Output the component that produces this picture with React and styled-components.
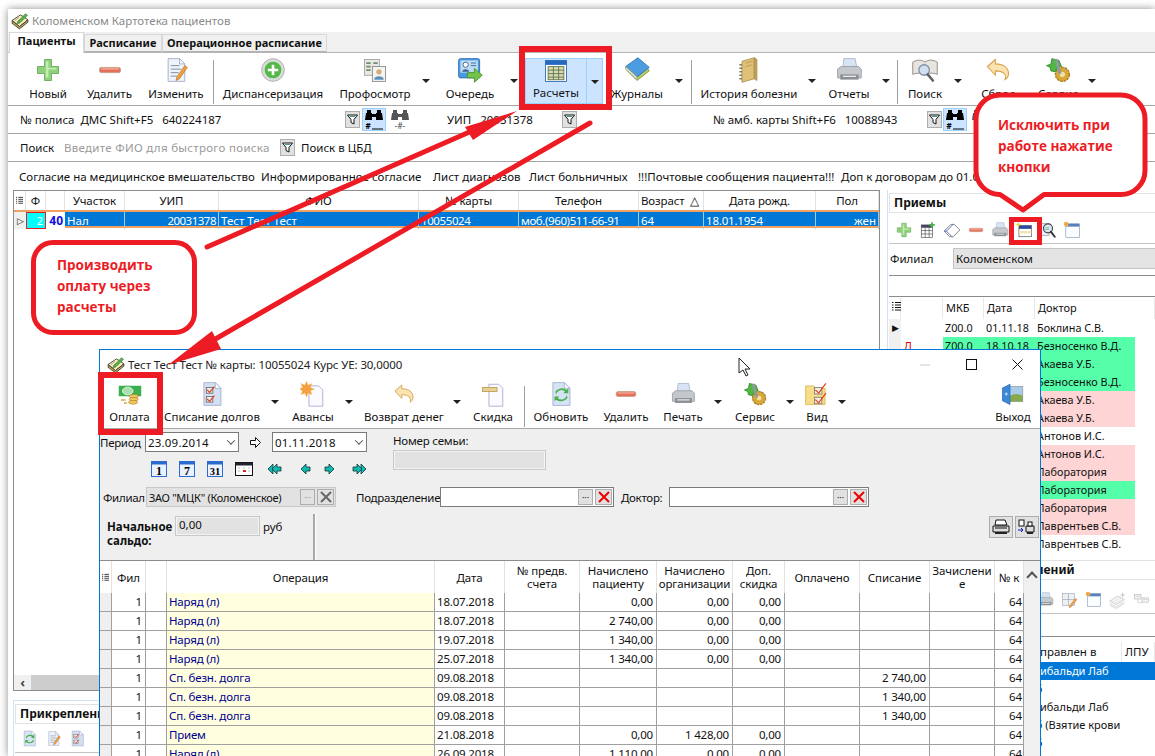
import React from "react";
import styled, { createGlobalStyle } from "styled-components";

const GlobalStyle = createGlobalStyle`
  html, body { margin: 0; padding: 0; background: #fff; overflow: hidden; }
  body { font-family: "Noto Sans", "Open Sans", sans-serif; font-size: 11.5px; color: #111; }
  #root { width: 1155px; height: 756px; position: relative; overflow: hidden; }
`;

/* ---------- icons ---------- */
const Svg = ({ s = 28, children }) => (
  <svg width={s} height={s} viewBox="0 0 32 32">{children}</svg>
);

const AppIcon = ({ s }) => (
  <Svg s={s}>
    <path d="M2 15L17 5l13 9-15 12z" fill="#f6eeb8" stroke="#333" strokeWidth="1.500" />
    <path d="M2 15v5l13 10 15-12v-4L15 26z" fill="#c8a850" stroke="#333" strokeWidth="1.500" />
    <path d="M13 16L26 3l3 3-13 13-5 2z" fill="#58b848" stroke="#2c6c24" strokeWidth="1.200" />
    <path d="M7 15l7-5M10 18l7-5" stroke="#777" />
  </Svg>
);
const PlusIcon = ({ s }) => (
  <Svg s={s}>
    <path d="M12 4h8v8h8v8h-8v8h-8v-8H4v-8h8z" fill="#8fd07a" stroke="#6aa85c" strokeLinejoin="round" />
    <path d="M13.500 6h3v7.500h9v2h-9v9h-3z" fill="#c3ecb2" />
  </Svg>
);
const MinusIcon = ({ s }) => (
  <Svg s={s}>
    <rect x="4" y="13" width="24" height="6" rx="2" fill="#e4705a" stroke="#c9a08a" />
    <rect x="6" y="14" width="20" height="1.500" fill="#f4b09c" />
  </Svg>
);
const DocBase = ({ fold = "#fff" }) => (
  <>
    <path d="M7 3h13l6 6v20H7z" fill="#eef4fb" stroke="#9fa8cc" />
    <path d="M20 3v6h6z" fill={fold} stroke="#9fa8cc" />
  </>
);
const NoteIcon = ({ s }) => (
  <Svg s={s}>
    <DocBase />
    <path d="M10 11h10M10 15h12M10 19h9M10 23h7" stroke="#7a8296" />
    <path d="M17 24l9-13 3 2-9 13-4 2z" fill="#f0a040" stroke="#a86a20" strokeWidth=".7" />
  </Svg>
);
const CirclePlusIcon = ({ s }) => (
  <Svg s={s}>
    <circle cx="16" cy="16" r="13" fill="#d8dcd8" stroke="#aaa" />
    <circle cx="16" cy="16" r="9.500" fill="#52b848" />
    <path d="M14.500 10h3v4.500H22v3h-4.500V22h-3v-4.500H10v-3h4.500z" fill="#fff" />
  </Svg>
);
const ProfileIcon = ({ s }) => (
  <Svg s={s}>
    <rect x="4" y="4" width="17" height="18" fill="#e8e8e4" stroke="#a0a0a0" />
    <path d="M6 8h5M6 12h5M6 16h5M14 8h5" stroke="#6f8f6f" strokeWidth="2" />
    <rect x="13" y="12" width="15" height="17" fill="#f4f4f0" stroke="#8a8a8a" />
    <circle cx="20.500" cy="18" r="3" fill="#d8a880" />
    <path d="M15 27c0-5 11-5 11 0z" fill="#5f8fb8" />
  </Svg>
);
const QueueIcon = ({ s }) => (
  <Svg s={s}>
    <rect x="3" y="3" width="24" height="22" rx="2" fill="#4a9ae0" stroke="#2c6cb0" />
    <rect x="5" y="5" width="20" height="14" fill="#bcdcf4" />
    <circle cx="11" cy="10" r="3" fill="#fff" stroke="#3a5a80" />
    <path d="M7 18c0-4 8-4 8 0z" fill="#3a6090" />
    <path d="M17 8h6M17 11h6" stroke="#3a6090" />
    <path d="M13 19h8v-5l9 8-9 8v-5h-8z" fill="#74c44a" stroke="#4a9030" />
  </Svg>
);
const CalcIcon = ({ s }) => (
  <Svg s={s}>
    <rect x="4" y="4" width="24" height="24" fill="#fff" stroke="#2c68b0" />
    <rect x="4" y="4" width="24" height="5" fill="#2468c0" />
    <rect x="7" y="11" width="18" height="15" fill="#d6dcb0" stroke="#5c7050" />
    <path d="M7 15h18M7 19h18M7 23h18M13 11v15M19 11v15" stroke="#5c7050" />
  </Svg>
);
const BookIcon = ({ s }) => (
  <Svg s={s}>
    <path d="M4 16l12 12 14-11-2-3-12 10L6 14z" fill="#b8cc60" stroke="#8a9a40" />
    <path d="M3 12L17 2l13 11-14 11z" fill="#4c9ce0" stroke="#2c74b8" />
    <path d="M3 12l13 12v3L3 15z" fill="#e8ecd8" stroke="#9aa080" />
  </Svg>
);
const NotebookIcon = ({ s }) => (
  <Svg s={s}>
    <path d="M8 6l14-4v24l-14 4z" fill="#e0c078" stroke="#a89050" />
    <path d="M22 2l3 2v24l-3-2z" fill="#c4a050" stroke="#a89050" />
    <path d="M8 10h-3M8 14h-3M8 18h-3M8 22h-3M8 26h-3" stroke="#807860" strokeWidth="1.500" />
    <path d="M12 8l8-2M12 12l8-2" stroke="#b89850" />
  </Svg>
);
const PrinterIcon = ({ s }) => (
  <Svg s={s}>
    <path d="M10 3h13l2 11H9z" fill="#d8e4f4" stroke="#a8b4c4" />
    <path d="M3 15l4-3h20l3 3v10H3z" fill="#c4c8cc" stroke="#989ca0" />
    <rect x="6" y="21" width="21" height="6" fill="#8c9094" />
    <rect x="9" y="22.500" width="15" height="1.500" fill="#e8e8e8" />
  </Svg>
);
const BookSearchIcon = ({ s }) => (
  <Svg s={s}>
    <path d="M2 7c5-3 10-3 14 0 4-3 9-3 14 0v14c-5-2-10-2-14 1-4-3-9-3-14-1z" fill="#e8e4e0" stroke="#8a8480" />
    <circle cx="15" cy="16" r="6" fill="#cfe0f0" stroke="#8090a0" strokeWidth="1.500" />
    <path d="M19 21l6 7" stroke="#606468" strokeWidth="3" strokeLinecap="round" />
  </Svg>
);
const UndoIcon = ({ s }) => (
  <Svg s={s}>
    <path d="M4 12l9-8v5c9 0 15 4 15 11 0 3-2 6-4 7 1-2 1-5-1-7s-5-3-10-3v5z" fill="#fae3b0" stroke="#d8a050" strokeWidth="1.200" />
  </Svg>
);
const ServiceIcon = ({ s }) => (
  <Svg s={s}>
    <circle cx="21" cy="21" r="8" fill="#d8a838" stroke="#a87c20" strokeWidth="1.500" strokeDasharray="3 1" />
    <circle cx="21" cy="21" r="3" fill="#f4e0a0" />
    <path d="M3 11l5-2 1-6 8 2 3 7-5 1-2 5-5-1-1-4z" fill="#50b840" stroke="#308a28" />
    <path d="M14 5l4 14" stroke="#9098a0" strokeWidth="3.500" strokeLinecap="round" />
  </Svg>
);
const MoneyIcon = ({ s }) => (
  <Svg s={s}>
    <rect x="1" y="5" width="30" height="14" fill="#3cb050" />
    <ellipse cx="13" cy="12" rx="7" ry="5" fill="#a8e0b0" stroke="#fff" />
    <path d="M4 24h6M8 28h4" stroke="#d8a840" strokeWidth="2" />
    <ellipse cx="21" cy="19" rx="6" ry="2.500" fill="#f0c860" stroke="#b88a30" />
    <ellipse cx="21" cy="23" rx="6" ry="2.500" fill="#f0c860" stroke="#b88a30" />
    <ellipse cx="20" cy="27" rx="6" ry="2.500" fill="#f0c860" stroke="#b88a30" />
  </Svg>
);
const CheckDocIcon = ({ s }) => (
  <Svg s={s}>
    <path d="M6 2h14l7 7v21H6z" fill="#d4e0f2" stroke="#9fa8cc" />
    <path d="M20 2v7h7z" fill="#fff" stroke="#9fa8cc" />
    <rect x="9" y="8" width="8" height="7" fill="#eee" stroke="#666" />
    <rect x="9" y="19" width="8" height="7" fill="#eee" stroke="#666" />
    <path d="M10 11l3 3 6-7M10 22l3 3 6-7" stroke="#e04020" strokeWidth="1.500" fill="none" />
  </Svg>
);
const StarDocIcon = ({ s }) => (
  <Svg s={s}>
    <path d="M11 6h12l5 5v20H11z" fill="#fafaff" stroke="#a8a0d0" />
    <path d="M8 0l2 5 5-2-2 5 5 2-5 2 2 5-5-2-2 5-2-5-5 2 2-5-5-2 5-2-2-5 5 2z" fill="#f4a040" stroke="#f8d080" strokeWidth=".5" />
  </Svg>
);
const TagDocIcon = ({ s }) => (
  <Svg s={s}>
    <path d="M11 4h12l5 5v22H11z" fill="#fafaff" stroke="#a8a0d0" />
    <rect x="3" y="8" width="18" height="5" fill="#e8d090" stroke="#b89a50" />
  </Svg>
);
const RefreshDocIcon = ({ s }) => (
  <Svg s={s}>
    <path d="M6 2h14l7 7v21H6z" fill="#d4e4f4" stroke="#9fa8cc" />
    <path d="M20 2v7h7z" fill="#fff" stroke="#9fa8cc" />
    <path d="M10 17a6.500 6.500 0 0 1 11-4l-2 2h6v-6l-2 2a10 10 0 0 0-14 2z" fill="#48b048" />
    <path d="M23 17a6.500 6.500 0 0 1-11 4l2-2H8v6l2-2a10 10 0 0 0 14-2z" fill="#48b048" />
  </Svg>
);
const FolderCheckIcon = ({ s }) => (
  <Svg s={s}>
    <path d="M2 6h10l2 3h12v20H2z" fill="#f8dc88" stroke="#d8b858" />
    <rect x="13" y="8" width="9" height="8" fill="#f4f0e0" stroke="#777" />
    <rect x="13" y="20" width="9" height="8" fill="#f4f0e0" stroke="#777" />
    <path d="M14 11l4 4 9-12M14 23l4 4 9-12" stroke="#e04020" strokeWidth="1.500" fill="none" />
  </Svg>
);
const ExitIcon = ({ s }) => (
  <Svg s={s}>
    <rect x="10" y="6" width="19" height="20" fill="#a8cce8" stroke="#8a9ab0" />
    <path d="M10 20c6-5 12-5 19-2v8H10z" fill="#88a850" />
    <path d="M2 8l10-5v27L2 25z" fill="#3c88d8" stroke="#2c68b0" />
    <path d="M5 16h4M7 14v4" stroke="#fff" />
  </Svg>
);
const TableAddIcon = ({ s }) => (
  <Svg s={s}>
    <rect x="4" y="7" width="20" height="22" fill="#fff" stroke="#333" />
    <rect x="4" y="7" width="20" height="5" fill="#446" />
    <path d="M4 17h20M4 23h20M11 12v17M18 12v17" stroke="#333" />
    <path d="M23 2v10M18 7h10" stroke="#48b048" strokeWidth="3" />
  </Svg>
);
const EraserIcon = ({ s }) => (
  <Svg s={s}>
    <path d="M2 18L14 6h6l10 10-12 12h-6z" fill="#fff" stroke="#333" />
    <path d="M2 18l4 0 12-12M6 18l10 10" fill="none" stroke="#3858c0" strokeWidth="1.500" />
  </Svg>
);
const WizardIcon = ({ s }) => (
  <Svg s={s}>
    <rect x="7" y="8" width="22" height="20" fill="#fff" stroke="#333" />
    <rect x="7" y="8" width="22" height="6" fill="#2c4ca0" />
    <rect x="7" y="18" width="22" height="4" fill="#f0e4b0" />
    <path d="M6 1l1.500 4 4 1.500-4 1.500L6 12 4.500 8l-4-1.500 4-1.500z" fill="#e8e040" />
  </Svg>
);
const FindDocIcon = ({ s }) => (
  <Svg s={s}>
    <rect x="4" y="4" width="14" height="22" fill="#eef" stroke="#888" />
    <circle cx="16" cy="13" r="8" fill="#dfeaf0" stroke="#444" strokeWidth="2" />
    <path d="M11 12h7M11 15h7" stroke="#2a9a90" />
    <path d="M21 19l7 9" stroke="#333" strokeWidth="3.500" strokeLinecap="round" />
  </Svg>
);
const WindowStarIcon = ({ s }) => (
  <Svg s={s}>
    <rect x="5" y="5" width="24" height="24" fill="#fbfcff" stroke="#7088b0" />
    <rect x="5" y="5" width="24" height="5" fill="#5880b8" />
    <rect x="2" y="2" width="7" height="7" fill="#f4a040" stroke="#f8e080" strokeDasharray="2 1" />
  </Svg>
);
const PencilGridIcon = ({ s }) => (
  <Svg s={s}>
    <rect x="3" y="5" width="22" height="22" fill="#f0f0f0" stroke="#8898b0" />
    <path d="M3 16h22M14 5v22" stroke="#8898b0" />
    <path d="M16 28l11-14 3 2-11 14-4 1z" fill="#f0a040" stroke="#a86a20" strokeWidth=".7" />
  </Svg>
);
const FadedPileIcon = ({ s }) => (
  <Svg s={s}>
    <path d="M3 18L17 9l12 6-14 9z" fill="#f0f0f0" stroke="#b8b8b8" />
    <path d="M3 22l12 6 14-9M3 25l12 6 14-9" fill="none" stroke="#b8b8b8" />
    <path d="M26 3v8M22 7h8" stroke="#c8c8c8" strokeWidth="2" />
  </Svg>
);
const FadedTreeIcon = ({ s }) => (
  <Svg s={s}>
    <rect x="3" y="7" width="12" height="8" fill="#f4f4f4" stroke="#aaa" />
    <rect x="17" y="13" width="12" height="8" fill="#f4f4f4" stroke="#aaa" />
    <path d="M9 15v7h8M5 10h8M19 16h8" stroke="#bbb" fill="none" />
  </Svg>
);
const FadedHelpIcon = ({ s }) => (
  <Svg s={s}>
    <path d="M5 3h22v24h-8l-3 3v-3H5z" fill="#fafafa" stroke="#b0b0b0" strokeWidth="1.500" strokeLinejoin="round" />
    <path d="M12 11c0-5 9-5 9 0 0 3-4 3-4 7M17 21v2" stroke="#aaa" strokeWidth="2" fill="none" />
  </Svg>
);
const FunnelIcon = () => (
  <svg width="11" height="11" viewBox="0 0 11 11">
    <path d="M.5 1h10L7 5.500V10L4 8.500v-3z" fill="#fff" stroke="#111" />
    <path d="M3 2.500h5" stroke="#3aa088" />
  </svg>
);
const BinocularIcon = ({ dim }) => (
  <svg width="20" height="22" viewBox="0 0 20 22">
    <g fill={dim ? "#555" : "#000"}>
      <rect x="3" y="1" width="4" height="3" />
      <rect x="13" y="1" width="4" height="3" />
      <path d="M2 4h6v7H1zM12 4h6l1 7h-7z" />
      <rect x="8" y="5" width="4" height="3" />
    </g>
    {dim ? (
      <text x="10" y="20" fontSize="8" textAnchor="middle" fontFamily="Noto Sans" fill="#444">-#-</text>
    ) : (
      <>
        <text x="4" y="20" fontSize="8" textAnchor="middle" fontFamily="Noto Sans" fontWeight="700">#</text>
        <path d="M8 20h11" stroke="#000" />
      </>
    )}
  </svg>
);
const ListGlyph = () => (
  <svg width="9" height="11" viewBox="0 0 9 11">
    <path d="M0 1.500h1.500M3 1.500h6M0 4h1.500M3 4h6M0 6.500h1.500M3 6.500h6M0 9h1.500M3 9h6" stroke="#111" />
  </svg>
);
const CalNum = ({ n }) => (
  <svg width="16" height="16" viewBox="0 0 16 16">
    <rect x=".5" y=".5" width="15" height="15" fill="#eaf2ff" stroke="#2c6cd0" />
    <rect x=".5" y=".5" width="15" height="3" fill="#2c6cd0" />
    <text x="8" y="14" fontSize={n.length > 1 ? 10.500 : 12} textAnchor="middle" fontFamily="Liberation Serif" fontWeight="700">{n}</text>
  </svg>
);
const CalGrid = () => (
  <svg width="18" height="14" viewBox="0 0 18 14">
    <rect x=".5" y=".5" width="17" height="13" fill="#fff" stroke="#111" />
    <rect x=".5" y=".5" width="17" height="3" fill="#223" />
    <path d="M3 6h2M8 6h2M13 6h2M3 9h2M13 9h2" stroke="#bbb" />
    <path d="M8 9h3" stroke="#d22" strokeWidth="2" />
  </svg>
);
const NavArrow = ({ flip, dbl }) => (
  <svg width="15" height="12" viewBox="0 0 15 12" style={{ transform: flip ? "scaleX(-1)" : "none" }}>
    {dbl && <path d="M1 6l5-5v10z" fill="#10b8b0" stroke="#133" strokeWidth=".8" />}
    <path d="M5 6l5-5v3h4v4h-4v3z" fill="#10b8b0" stroke="#133" strokeWidth=".8" />
  </svg>
);
const HollowArrow = () => (
  <svg width="11" height="11" viewBox="0 0 11 11">
    <path d="M.5 3.500h5V.5l5 5-5 5v-3h-5z" fill="#fff" stroke="#111" />
  </svg>
);
const XMark = ({ color }) => (
  <svg width="12" height="12" viewBox="0 0 12 12">
    <path d="M1 1l10 10M11 1L1 11" stroke={color} strokeWidth="2" />
  </svg>
);
const SmallPrinter = () => (
  <svg width="18" height="16" viewBox="0 0 18 16">
    <path d="M4 1h9l2 5H3z" fill="#fff" stroke="#111" />
    <path d="M1 7h16v6H1z" fill="#ddd" stroke="#111" />
    <path d="M3 13h12v2H3z" fill="#222" />
    <path d="M3 9h12" stroke="#111" />
  </svg>
);
const PrintSendIcon = () => (
  <svg width="18" height="16" viewBox="0 0 18 16">
    <rect x="1" y="1" width="5" height="6" fill="#fff" stroke="#111" />
    <path d="M0 11h5M3 9l2 2-2 2" stroke="#1018c0" fill="none" />
    <path d="M8 7h8v6H8z" fill="#ddd" stroke="#111" />
    <path d="M9 13h6v2H9z" fill="#222" />
    <rect x="10" y="3" width="4" height="4" fill="#fff" stroke="#111" />
  </svg>
);

/* ---------- windows ---------- */
const MainWindow = styled.div`
  position: absolute;
  left: 8px;
  top: 9px;
  width: 1147px;
  height: 747px;
  background: #fff;
  box-shadow: 0 0 8px rgba(0, 0, 0, 0.45);
  overflow: hidden;
  display: flex;
  flex-direction: column;
`;
const TitleBar = styled.div`
  height: 23px;
  display: flex;
  align-items: center;
  gap: 3px;
  padding-left: 3px;
  color: ${(p) => p.$color || "#8a8a8a"};
  flex: none;
`;
const TitleText = styled.span`
  font-size: 11.500px;
  white-space: nowrap;
  letter-spacing: ${(p) => p.$ls || 0}px;
`;
const TabStrip = styled.div`
  height: 21px;
  flex: none;
  background: #f0f0f0;
  border-bottom: 1px solid #b4b4b4;
  display: flex;
  align-items: flex-end;
  padding-left: 1px;
  box-sizing: border-box;
`;
const Tab = styled.div`
  width: ${(p) => p.$w}px;
  height: ${(p) => (p.$active ? 21 : 18)}px;
  margin-bottom: ${(p) => (p.$active ? -1 : 0)}px;
  background: ${(p) => (p.$active ? "#fff" : "#f0f0f0")};
  border: 1px solid #d8d8d8;
  border-bottom: ${(p) => (p.$active ? "none" : "1px solid #b4b4b4")};
  box-sizing: border-box;
  font-weight: 700;
  font-size: 11px;
  text-align: center;
  line-height: 16px;
  white-space: nowrap;
`;

const Toolbar = styled.div`
  height: ${(p) => p.$h}px;
  flex: none;
  display: flex;
  align-items: stretch;
  padding-left: ${(p) => p.$pl}px;
  border-bottom: 1px solid #a8a8a8;
  box-sizing: border-box;
  background: #fff;
`;
const ToolButton = styled.div`
  width: ${(p) => p.$w}px;
  flex: none;
  display: flex;
  flex-direction: column;
  align-items: center;
  justify-content: flex-end;
  padding-bottom: ${(p) => p.$pb}px;
  box-sizing: border-box;
  white-space: nowrap;
`;
const ToolIcon = styled.div`
  height: 32px;
  display: flex;
  align-items: center;
  justify-content: center;
`;
const Caret = styled.div`
  width: ${(p) => p.$w || 14}px;
  flex: none;
  display: flex;
  justify-content: center;
  padding-top: ${(p) => p.$top}px;
  &::after {
    content: "";
    border-left: 4px solid transparent;
    border-right: 4px solid transparent;
    border-top: 4px solid #222;
    height: 0;
  }
`;
const ToolSep = styled.div`
  width: 1px;
  flex: none;
  background: #a0a0a0;
  margin: 7px 1px 1px ${(p) => p.$ml ?? 1}px;
`;
const SplitHighlight = styled.div`
  display: flex;
  flex: none;
  margin-left: 4px;
  background: #cce4ff;
  border: 1px solid #99d1ff;
  margin-top: 5px;
  margin-bottom: 1px;
  box-sizing: border-box;
`;
const SplitDivider = styled.div`
  width: 1px;
  background: #99d1ff;
`;

const FilterRow = styled.div`
  height: 28px;
  flex: none;
  display: flex;
  align-items: center;
  padding-left: 12px;
  border-bottom: 1px solid #a4a4a4;
  box-sizing: border-box;
  white-space: nowrap;
`;
const Slot = styled.div`
  width: ${(p) => p.$w}px;
  flex: none;
  margin-left: ${(p) => p.$ml || 0}px;
  color: ${(p) => p.$color || "inherit"};
  letter-spacing: ${(p) => p.$ls || 0}px;
  white-space: pre;
`;
const FunnelButton = styled.div`
  width: 15px;
  height: 17px;
  flex: none;
  background: #e1e1e1;
  border: 1px solid #adadad;
  box-sizing: border-box;
  display: flex;
  align-items: center;
  justify-content: center;
`;
const BinocButton = styled.div`
  width: 24px;
  height: 23px;
  flex: none;
  margin-left: ${(p) => p.$ml || 0}px;
  background: ${(p) => (p.$on ? "#cce4ff" : "transparent")};
  border: 1px solid ${(p) => (p.$on ? "#99d1ff" : "transparent")};
  box-sizing: border-box;
  display: flex;
  align-items: center;
  justify-content: center;
`;

const LinkRow = styled.div`
  height: 28px;
  flex: none;
  display: flex;
  align-items: center;
  padding-left: 11px;
  white-space: nowrap;
`;
const LinkItem = styled.span`
  width: ${(p) => p.$w}px;
  flex: none;
`;

/* ---------- workspace of the main window ---------- */
const Workspace = styled.div`
  flex: 1;
  display: flex;
  min-height: 0;
  padding-left: 5px;
`;
const LeftCol = styled.div`
  width: 867px;
  flex: none;
  display: flex;
  flex-direction: column;
`;
const PatientGrid = styled.div`
  height: 501px;
  flex: none;
  border: 1px solid #8c8c8c;
  box-sizing: border-box;
  display: flex;
  flex-direction: column;
`;
const GridRow = styled.div`
  display: grid;
  grid-template-columns: ${(p) => p.$cols};
  height: ${(p) => p.$h}px;
  flex: none;
  white-space: nowrap;
`;
const HeadCell = styled.div`
  display: flex;
  align-items: center;
  justify-content: ${(p) => (p.$left ? "flex-start" : "center")};
  text-align: center;
  line-height: 13px;
  border-right: 1px solid #e2e2e2;
  padding: 0 2px;
  overflow: hidden;
  white-space: ${(p) => (p.$wrap ? "normal" : "nowrap")};
  background: #fff;
  min-width: 0;
  letter-spacing: -0.1px;
`;
const SelectedRow = styled(GridRow)`
  background: #0078d7;
  border-top: 2px solid #f0a060;
  border-bottom: 2px solid #f0a060;
  color: #fff;
  box-sizing: border-box;
`;
const SelCell = styled.div`
  display: flex;
  align-items: center;
  justify-content: ${(p) => (p.$right ? "flex-end" : "flex-start")};
  padding: 0 2px;
  border-right: 1px solid #a8c8e0;
  overflow: hidden;
  letter-spacing: ${(p) => p.$ls || 0}px;
`;
const StateCell = styled.div`
  display: flex;
  align-items: center;
  justify-content: flex-end;
  padding: 0 2px;
  background: ${(p) => p.$bg};
  color: ${(p) => p.$color};
  font-weight: ${(p) => p.$weight || 400};
  font-size: ${(p) => p.$size || "11.5px"};
  border: ${(p) => (p.$border ? `1px solid ${p.$border}` : "none")};
  box-sizing: border-box;
`;
const IndicatorCell = styled.div`
  display: flex;
  align-items: center;
  justify-content: center;
  background: #f0f0f0;
  color: #111;
  font-size: 9px;
`;
const GridFill = styled.div`
  flex: 1;
`;
const HScroll = styled.div`
  height: 15px;
  flex: none;
  background: #f0f0f0;
  display: flex;
  align-items: center;
`;
const HScrollArrow = styled.div`
  width: 17px;
  text-align: center;
  color: #444;
  font-weight: 700;
  font-size: 13px;
  line-height: 15px;
`;
const HScrollThumb = styled.div`
  flex: 1;
  height: 100%;
  background: #cdcdcd;
`;
const BottomPanel = styled.div`
  margin-top: 9px;
  flex: 1;
  border-left: 1px solid #cfe3f5;
  border-top: 1px solid #cfe3f5;
  padding: 3px 0 0 1px;
`;
const PanelHead = styled.div`
  height: 18px;
  border: 1px solid #e2e2e2;
  border-right: none;
  font-weight: 700;
  font-size: 12px;
  line-height: 17px;
  padding-left: ${(p) => p.$pl || 4}px;
  white-space: nowrap;
  background: #fff;
`;
const IconRow = styled.div`
  height: ${(p) => p.$h || 29}px;
  display: flex;
  align-items: center;
  padding: ${(p) => p.$pt || 0}px 0 0 ${(p) => p.$pl}px;
  border-bottom: 1px solid #c4c4c4;
  box-sizing: border-box;
`;
const IconSlot = styled.div`
  width: ${(p) => p.$w || 24}px;
  flex: none;
  display: flex;
  justify-content: center;
`;
const RightCol = styled.div`
  margin-left: 7px;
  flex: 1;
  min-width: 0;
  display: flex;
  flex-direction: column;
`;
const RightPanel = styled.div`
  border-left: 1px solid #cfe3f5;
  padding: 3px 0 0 1px;
  height: ${(p) => p.$h}px;
  flex: none;
  overflow: hidden;
`;
const BranchRow = styled.div`
  height: 32px;
  display: flex;
  align-items: center;
  border-bottom: 1px solid #8c8c8c;
  padding: 0 0 3px 1px;
  box-sizing: border-box;
`;
const BranchLabel = styled.div`
  width: 63px;
  flex: none;
`;
const BranchValue = styled.div`
  flex: 1;
  height: 21px;
  background: #e4e4e4;
  border: 1px solid #c4c4c4;
  border-right: none;
  box-sizing: border-box;
  line-height: 19px;
  padding-left: 2px;
`;
const BlankStrip = styled.div`
  height: ${(p) => p.$h}px;
  border-bottom: 1px solid #8c8c8c;
  box-sizing: border-box;
`;
const VisitHead = styled.div`
  height: 22px;
  padding-top: 1px;
  box-sizing: border-box;
  display: grid;
  grid-template-columns: 12px 42px 41px 51px 1fr;
  font-size: 11px;
`;
const VisitHeadCell = styled.div`
  padding-left: 3px;
  line-height: 20px;
  border-right: 1px solid #e8e8e8;
`;
const VisitRow = styled.div`
  height: 18px;
  display: grid;
  grid-template-columns: 12px 42px 192px 1fr;
  line-height: 18px;
  white-space: nowrap;
  font-size: 10.800px;
`;
const VisitMark = styled.div`
  color: #e00000;
  text-align: left;
  padding-left: 3px;
  background: #fff;
`;
const VisitArrow = styled.div`
  background: #f0f0f0;
  text-align: center;
  font-size: 9px;
`;
const VisitBody = styled.div`
  background: ${(p) => p.$bg || "#fff"};
  display: grid;
  grid-template-columns: 41px 51px 1fr;
  padding-left: 2px;
  overflow: hidden;
`;
const ReferralHead = styled.div`
  height: 25px;
  display: grid;
  grid-template-columns: 100px 1fr;
  margin-left: 133px;
  padding-top: 5px;
  box-sizing: border-box;
`;
const ReferralRow = styled.div`
  height: 18px;
  line-height: 18px;
  padding-left: 133px;
  white-space: nowrap;
  font-size: 11px;
  background: ${(p) => (p.$on ? "#0078d7" : "#fff")};
  color: ${(p) => (p.$on ? "#fff" : "#111")};
`;

/* ---------- child window ---------- */
const ChildWindow = styled.div`
  position: absolute;
  left: 99px;
  top: 349px;
  width: 942px;
  height: 407px;
  background: #efefef;
  border: 1px solid #0078d7;
  border-bottom: none;
  box-sizing: border-box;
  display: flex;
  flex-direction: column;
  overflow: hidden;
`;
const ChildTitle = styled(TitleBar)`
  height: 29px;
  background: #fff;
  padding-left: 7px;
`;
const WinControls = styled.div`
  margin-left: auto;
  display: flex;
  align-items: center;
`;
const WinButton = styled.div`
  width: 46px;
  height: 29px;
  display: flex;
  align-items: center;
  justify-content: center;
`;
const ToolSpring = styled.div`
  flex: 1;
`;
const FormArea = styled.div`
  height: 131px;
  flex: none;
  padding-top: 3px;
  box-sizing: border-box;
  display: flex;
  flex-direction: column;
`;
const FormTop = styled.div`
  height: 55px;
  flex: none;
  display: flex;
`;
const DateBlock = styled.div`
  width: 293px;
  flex: none;
`;
const DateLine = styled.div`
  display: flex;
  align-items: center;
  height: 20px;
`;
const FieldLabel = styled.div`
  width: ${(p) => p.$w}px;
  flex: none;
  margin-left: ${(p) => p.$ml || 0}px;
  white-space: nowrap;
  letter-spacing: -0.3px;
`;
const DateInput = styled.div`
  width: ${(p) => p.$w}px;
  height: 20px;
  flex: none;
  background: #fff;
  border: 1px solid #7a7a7a;
  box-sizing: border-box;
  display: flex;
  align-items: center;
  justify-content: space-between;
  padding: 0 4px 0 2px;
  letter-spacing: 0.2px;
`;
const ChevronDown = styled.span`
  width: 5px;
  height: 5px;
  border-right: 1px solid #555;
  border-bottom: 1px solid #555;
  transform: rotate(45deg) translate(-1px, -1px);
`;
const BetweenArrow = styled.div`
  width: 33px;
  flex: none;
  display: flex;
  justify-content: center;
`;
const NavRow = styled.div`
  display: flex;
  align-items: center;
  margin-top: 9px;
  padding-left: 45px;
`;
const FamilyBlock = styled.div`
  width: 153px;
  flex: none;
  line-height: 18px;
  letter-spacing: -0.2px;
`;
const GrayBox = styled.div`
  height: ${(p) => p.$h}px;
  width: ${(p) => p.$w || "auto"};
  flex: none;
  margin-top: ${(p) => p.$mt || 0}px;
  background: #e2e2e2;
  border: 1px solid #c8c8c8;
  box-shadow: inset 0 0 0 1px #f4f4f4;
  box-sizing: border-box;
  line-height: ${(p) => p.$h - 4}px;
  padding-left: 3px;
`;
const FormLine = styled.div`
  height: 20px;
  flex: none;
  display: flex;
  align-items: center;
  white-space: nowrap;
`;
const LookupBox = styled.div`
  width: ${(p) => p.$w}px;
  height: 20px;
  flex: none;
  background: ${(p) => (p.$off ? "#e2e2e2" : "#fff")};
  border: 1px solid ${(p) => (p.$off ? "#c8c8c8" : "#7a7a7a")};
  box-sizing: border-box;
  display: flex;
  align-items: center;
  padding: 0 1px 0 2px;
  gap: 2px;
`;
const LookupText = styled.div`
  flex: 1;
  overflow: hidden;
  font-size: 11px;
  letter-spacing: -0.3px;
`;
const LookupBtn = styled.div`
  width: ${(p) => p.$w}px;
  height: 16px;
  flex: none;
  background: #e1e1e1;
  border: 1px solid #adadad;
  box-sizing: border-box;
  display: flex;
  align-items: center;
  justify-content: center;
  color: ${(p) => p.$color || "#222"};
  font-size: 9px;
  line-height: 1;
`;
const SaldoLine = styled.div`
  flex: 1;
  display: flex;
  margin-top: 7px;
`;
const SaldoLabel = styled.div`
  width: 68px;
  margin-left: 7px;
  font-weight: 700;
  line-height: 14px;
  padding-top: 6px;
  flex: none;
`;
const Rub = styled.div`
  margin-left: 3px;
  width: 50px;
  flex: none;
  padding-top: 5px;
`;
const SaldoDivider = styled.div`
  width: 2px;
  background: #a8a8a8;
  border-right: 1px solid #fff;
  flex: none;
`;
const SquareButton = styled.div`
  width: 24px;
  height: 22px;
  flex: none;
  margin-left: 2px;
  background: #e1e1e1;
  border: 1px solid #adadad;
  box-sizing: border-box;
  display: flex;
  align-items: center;
  justify-content: center;
`;
const SaldoButtons = styled.div`
  margin-left: auto;
  display: flex;
  padding-top: 2px;
  margin-right: 1px;
`;
const LedgerWrap = styled.div`
  flex: 1;
  display: flex;
  min-height: 0;
  border-top: 1px solid #8c8c8c;
`;
const Ledger = styled.div`
  width: 924px;
  flex: none;
  background: #fff;
  overflow: hidden;
`;
const LedgerCell = styled.div`
  height: 19px;
  box-sizing: border-box;
  border-right: 1px solid #a0a0a0;
  border-bottom: 1px solid #a0a0a0;
  line-height: 17px;
  padding: 0 ${(p) => (p.$right ? 3 : 2)}px 0 ${(p) => p.$pl || 2}px;
  text-align: ${(p) => (p.$right ? "right" : "left")};
  background: ${(p) => p.$bg || "#fff"};
  color: ${(p) => p.$color || "#111"};
  overflow: hidden;
  letter-spacing: -0.2px;
`;
const VScroll = styled.div`
  flex: 1;
  background: #f0f0f0;
  display: flex;
  justify-content: center;
  padding-top: 8px;
  color: #555;
`;
const UpCaret = styled.span`
  width: 6px;
  height: 6px;
  border-left: 2px solid #555;
  border-top: 2px solid #555;
  transform: rotate(45deg);
  margin-top: 4px;
`;

/* ---------- annotations over the screenshot ---------- */
const Overlay = styled.svg`
  position: absolute;
  left: 0;
  top: 0;
  pointer-events: none;
`;
const RedBox = styled.div`
  position: absolute;
  left: ${(p) => p.$x}px;
  top: ${(p) => p.$y}px;
  width: ${(p) => p.$w}px;
  height: ${(p) => p.$h}px;
  border: ${(p) => p.$b || 6}px solid #ed1c24;
  box-sizing: border-box;
`;
const Note = styled.div`
  position: absolute;
  left: ${(p) => p.$x}px;
  top: ${(p) => p.$y}px;
  color: #ed1c24;
  font-family: "Open Sans", "Noto Sans", sans-serif;
  font-weight: 700;
  font-size: 13.500px;
  line-height: 21px;
  white-space: nowrap;
`;
const LeftBubble = styled.div`
  position: absolute;
  left: 31px;
  top: 240px;
  width: 166px;
  height: 95px;
  border: 5px solid #ed1c24;
  border-radius: 22px;
  background: #fff;
  box-sizing: border-box;
`;
const MouseCursor = styled.svg`
  position: absolute;
  left: 738px;
  top: 357px;
`;

/* ---------- data ---------- */
const patientCols = "12px 20px 19px 60px 94px 200px 100px 120px 65px 112px 1fr";
const ledgerCols = "12px 34px 21px 268px 70px 75px 77px 76px 52px 75px 70px 65px 29px";

const visits = [
  { mkb: "Z00.0", date: "01.11.18", doc: "Боклина С.В.", first: true },
  { mkb: "Z00.0", date: "18.10.18", doc: "Безносенко В.Д.", bg: "#55ffaa", mark: "Д" },
  { mkb: "Z00.0", date: "18.10.18", doc: "Акаева У.Б.", bg: "#55ffaa" },
  { mkb: "Z00.0", date: "18.10.18", doc: "Безносенко В.Д.", bg: "#55ffaa" },
  { mkb: "Z00.0", date: "18.10.18", doc: "Акаева У.Б.", bg: "#ffd4d4" },
  { mkb: "Z00.0", date: "18.10.18", doc: "Акаева У.Б.", bg: "#ffd4d4" },
  { mkb: "Z00.0", date: "18.10.18", doc: "Антонов И.С." },
  { mkb: "Z00.0", date: "18.10.18", doc: "Антонов И.С.", bg: "#ffd4d4" },
  { mkb: "Z00.0", date: "18.10.18", doc: "Лаборатория", bg: "#ffd4d4" },
  { mkb: "Z00.0", date: "18.10.18", doc: "Лаборатория", bg: "#55ffaa" },
  { mkb: "Z00.0", date: "18.10.18", doc: "Лаборатория", bg: "#ffd4d4" },
  { mkb: "Z00.0", date: "18.10.18", doc: "Лаврентьев С.В.", bg: "#ffd4d4" },
  { mkb: "Z00.0", date: "18.10.18", doc: "Лаврентьев С.В." },
];

const ledger = [
  ["Наряд (л)", "18.07.2018", "0,00", "0,00", "0,00", ""],
  ["Наряд (л)", "18.07.2018", "2 740,00", "0,00", "0,00", ""],
  ["Наряд (л)", "19.07.2018", "1 340,00", "0,00", "0,00", ""],
  ["Наряд (л)", "25.07.2018", "1 340,00", "0,00", "0,00", ""],
  ["Сп. безн. долга", "09.08.2018", "", "", "", "2 740,00"],
  ["Сп. безн. долга", "09.08.2018", "", "", "", "1 340,00"],
  ["Сп. безн. долга", "09.08.2018", "", "", "", "1 340,00"],
  ["Прием", "21.08.2018", "0,00", "1 428,00", "0,00", ""],
  ["Наряд (л)", "26.09.2018", "1 110,00", "0,00", "0,00", ""],
];

const ledgerHead = ["", "Фил", "", "Операция", "Дата", "№ предв. счета", "Начислено пациенту", "Начислено организации", "Доп. скидка", "Оплачено", "Списание", "Зачислени е", "№ к"];

const PatientHeader = () => (
  <GridRow $cols={patientCols} $h={19}>
    <HeadCell><ListGlyph /></HeadCell>
    <HeadCell>Ф</HeadCell>
    <HeadCell />
    <HeadCell>Участок</HeadCell>
    <HeadCell>УИП</HeadCell>
    <HeadCell>ФИО</HeadCell>
    <HeadCell>№ карты</HeadCell>
    <HeadCell>Телефон</HeadCell>
    <HeadCell $left>Возраст&nbsp;&nbsp;△</HeadCell>
    <HeadCell>Дата рожд.</HeadCell>
    <HeadCell>Пол</HeadCell>
  </GridRow>
);

const App = () => (
  <>
    <GlobalStyle />
    <MainWindow>
      <TitleBar>
        <AppIcon s={18} />
        <TitleText>Коломенском Картотека пациентов</TitleText>
      </TitleBar>
      <TabStrip>
        <Tab $w={75} $active>Пациенты</Tab>
        <Tab $w={78}>Расписание</Tab>
        <Tab $w={165}>Операционное расписание</Tab>
      </TabStrip>
      <Toolbar $h={53} $pl={10}>
        <ToolButton $w={60} $pb={4}><ToolIcon><PlusIcon /></ToolIcon>Новый</ToolButton>
        <ToolButton $w={63} $pb={4}><ToolIcon><MinusIcon /></ToolIcon>Удалить</ToolButton>
        <ToolButton $w={70} $pb={4}><ToolIcon><NoteIcon /></ToolIcon>Изменить</ToolButton>
        <ToolSep $ml={2} />
        <ToolButton $w={116} $pb={4}><ToolIcon><CirclePlusIcon /></ToolIcon>Диспансеризация</ToolButton>
        <ToolButton $w={88} $pb={4}><ToolIcon><ProfileIcon /></ToolIcon>Профосмотр</ToolButton>
        <Caret $top={26} />
        <ToolButton $w={74} $pb={4}><ToolIcon><QueueIcon /></ToolIcon>Очередь</ToolButton>
        <Caret $top={26} />
        <SplitHighlight>
          <ToolButton $w={60} $pb={3}><ToolIcon><CalcIcon /></ToolIcon>Расчеты</ToolButton>
          <SplitDivider />
          <Caret $w={15} $top={21} />
        </SplitHighlight>
        <ToolButton $w={68} $pb={4}><ToolIcon><BookIcon /></ToolIcon>Журналы</ToolButton>
        <Caret $w={16} $top={26} />
        <ToolSep $ml={4} />
        <ToolButton $w={112} $pb={4}><ToolIcon><NotebookIcon /></ToolIcon>История болезни</ToolButton>
        <Caret $top={26} />
        <ToolButton $w={60} $pb={4}><ToolIcon><PrinterIcon /></ToolIcon>Отчеты</ToolButton>
        <Caret $top={26} />
        <ToolSep $ml={4} />
        <ToolButton $w={52} $pb={4}><ToolIcon><BookSearchIcon /></ToolIcon>Поиск</ToolButton>
        <Caret $top={26} />
        <ToolButton $w={66} $pb={4}><ToolIcon><UndoIcon /></ToolIcon>Сброс</ToolButton>
        <ToolButton $w={54} $pb={4}><ToolIcon><ServiceIcon /></ToolIcon>Сервис</ToolButton>
        <Caret $top={26} />
      </Toolbar>
      <FilterRow>
        <Slot $w={325}>№ полиса  ДМС Shift+F5   640224187</Slot>
        <FunnelButton><FunnelIcon /></FunnelButton>
        <BinocButton $on $ml={2}><BinocularIcon /></BinocButton>
        <BinocButton $ml={2}><BinocularIcon dim /></BinocButton>
        <Slot $w={115} $ml={35}>УИП   20031378</Slot>
        <FunnelButton><FunnelIcon /></FunnelButton>
        <Slot $w={136} />
        <Slot $w={214}>№ амб. карты Shift+F6   10088943</Slot>
        <FunnelButton><FunnelIcon /></FunnelButton>
        <BinocButton $on $ml={1}><BinocularIcon /></BinocButton>
        <BinocButton $ml={2}><BinocularIcon dim /></BinocButton>
      </FilterRow>
      <FilterRow>
        <Slot $w={44}>Поиск</Slot>
        <Slot $w={216} $color="#9a9a9a" $ls={0.3}>Введите ФИО для быстрого поиска</Slot>
        <FunnelButton><FunnelIcon /></FunnelButton>
        <Slot $w={90} $ml={6}>Поиск в ЦБД</Slot>
      </FilterRow>
      <LinkRow>
        <LinkItem $w={242}>Согласие на медицинское вмешательство</LinkItem>
        <LinkItem $w={172}>Информированное согласие</LinkItem>
        <LinkItem $w={96}>Лист диагнозов</LinkItem>
        <LinkItem $w={109}>Лист больничных</LinkItem>
        <LinkItem $w={203}>!!!Почтовые сообщения пациента!!!</LinkItem>
        <LinkItem $w={134}>Доп к договорам до 01.09</LinkItem>
      </LinkRow>
      <Workspace>
        <LeftCol>
          <PatientGrid>
            <PatientHeader />
            <SelectedRow $cols={patientCols} $h={18}>
              <IndicatorCell>▷</IndicatorCell>
              <StateCell $bg="#00ffff" $color="#fff" $border="#e02020">2</StateCell>
              <StateCell $bg="#fff" $color="#1010e0" $weight={700} $size="12px">40</StateCell>
              <SelCell>Нал</SelCell>
              <SelCell $right $ls={-0.5}>20031378</SelCell>
              <SelCell>Тест Тест Тест</SelCell>
              <SelCell $ls={-0.4}>10055024</SelCell>
              <SelCell $ls={-0.4}>моб.(960)511-66-91</SelCell>
              <SelCell>64</SelCell>
              <SelCell $ls={-0.2}>18.01.1954</SelCell>
              <SelCell $right>жен</SelCell>
            </SelectedRow>
            <GridFill />
            <HScroll>
              <HScrollArrow>‹</HScrollArrow>
              <HScrollThumb />
            </HScroll>
          </PatientGrid>
          <BottomPanel>
            <PanelHead>Прикрепления</PanelHead>
            <IconRow $pl={2}>
              <IconSlot><RefreshDocIcon s={17} /></IconSlot>
              <IconSlot><NoteIcon s={17} /></IconSlot>
              <IconSlot><CheckDocIcon s={17} /></IconSlot>
            </IconRow>
          </BottomPanel>
        </LeftCol>
        <RightCol>
          <RightPanel $h={364}>
            <PanelHead>Приемы</PanelHead>
            <IconRow $pl={3} $h={31} $pt={3}>
              <IconSlot><PlusIcon s={18} /></IconSlot>
              <IconSlot><TableAddIcon s={18} /></IconSlot>
              <IconSlot><EraserIcon s={18} /></IconSlot>
              <IconSlot><MinusIcon s={18} /></IconSlot>
              <IconSlot><PrinterIcon s={18} /></IconSlot>
              <IconSlot><WizardIcon s={18} /></IconSlot>
              <IconSlot><FindDocIcon s={18} /></IconSlot>
              <IconSlot><WindowStarIcon s={18} /></IconSlot>
            </IconRow>
            <BranchRow>
              <BranchLabel>Филиал</BranchLabel>
              <BranchValue>Коломенском</BranchValue>
            </BranchRow>
            <BlankStrip $h={21} />
            <VisitHead>
              <VisitHeadCell><ListGlyph /></VisitHeadCell>
              <VisitHeadCell />
              <VisitHeadCell>МКБ</VisitHeadCell>
              <VisitHeadCell>Дата</VisitHeadCell>
              <VisitHeadCell>Доктор</VisitHeadCell>
            </VisitHead>
            {visits.map((v, i) => (
              <VisitRow key={i}>
                <VisitArrow>{v.first ? "▶" : ""}</VisitArrow>
                <VisitMark>{v.mark}</VisitMark>
                <VisitBody $bg={v.bg}>
                  <span>{v.mkb}</span>
                  <span>{v.date}</span>
                  <span>{v.doc}</span>
                </VisitBody>
              </VisitRow>
            ))}
          </RightPanel>
          <RightPanel $h={208}>
            <PanelHead $pl={100}>Направлений</PanelHead>
            <IconRow $pl={48} $h={34} $pt={6}>
              <IconSlot><NoteIcon s={17} /></IconSlot>
              <IconSlot><MinusIcon s={17} /></IconSlot>
              <IconSlot><CalcIcon s={17} /></IconSlot>
              <IconSlot><EraserIcon s={17} /></IconSlot>
              <IconSlot><PrinterIcon s={17} /></IconSlot>
              <IconSlot><PencilGridIcon s={17} /></IconSlot>
              <IconSlot><WindowStarIcon s={17} /></IconSlot>
              <IconSlot><FadedPileIcon s={18} /></IconSlot>
              <IconSlot><FadedTreeIcon s={17} /></IconSlot>
              <IconSlot><FadedHelpIcon s={17} /></IconSlot>
            </IconRow>
            <BlankStrip $h={23} />
            <ReferralHead>
              <VisitHeadCell>Направлен в</VisitHeadCell>
              <VisitHeadCell>ЛПУ</VisitHeadCell>
            </ReferralHead>
            <ReferralRow $on>Гарибальди Лаб</ReferralRow>
            <ReferralRow>Лаб</ReferralRow>
            <ReferralRow>Гарибальди Лаб</ReferralRow>
            <ReferralRow>Лаб  (Взятие крови</ReferralRow>
            <ReferralRow>Лаб</ReferralRow>
            <ReferralRow>Лаб</ReferralRow>
          </RightPanel>
        </RightCol>
      </Workspace>
    </MainWindow>

    <ChildWindow>
      <ChildTitle $color="#222">
        <AppIcon s={18} />
        <TitleText $ls={-0.1}>Тест Тест Тест № карты: 10055024 Курс УЕ: 30,0000</TitleText>
        <WinControls>
          <WinButton>
            <svg width="10" height="10"><path d="M0 5h10" stroke="#ccc" /></svg>
          </WinButton>
          <WinButton>
            <svg width="11" height="11"><rect x=".5" y=".5" width="10" height="10" fill="none" stroke="#111" /></svg>
          </WinButton>
          <WinButton>
            <svg width="11" height="11"><path d="M.5.5l10 10M10.500.5l-10 10" stroke="#111" /></svg>
          </WinButton>
        </WinControls>
      </ChildTitle>
      <Toolbar $h={50} $pl={0}>
        <ToolButton $w={59} $pb={4}><ToolIcon><MoneyIcon s={24} /></ToolIcon>Оплата</ToolButton>
        <ToolButton $w={106} $pb={4}><ToolIcon><CheckDocIcon s={26} /></ToolIcon>Списание долгов</ToolButton>
        <Caret $w={20} $top={21} />
        <ToolButton $w={56} $pb={4}><ToolIcon><StarDocIcon s={26} /></ToolIcon>Авансы</ToolButton>
        <Caret $w={16} $top={21} />
        <ToolButton $w={94} $pb={4}><ToolIcon><UndoIcon s={24} /></ToolIcon>Возврат денег</ToolButton>
        <Caret $w={12} $top={21} />
        <ToolButton $w={60} $pb={4}><ToolIcon><TagDocIcon s={26} /></ToolIcon>Скидка</ToolButton>
        <ToolSep />
        <ToolButton $w={70} $pb={4}><ToolIcon><RefreshDocIcon s={26} /></ToolIcon>Обновить</ToolButton>
        <ToolButton $w={60} $pb={4}><ToolIcon><MinusIcon s={26} /></ToolIcon>Удалить</ToolButton>
        <ToolButton $w={54} $pb={4}><ToolIcon><PrinterIcon s={26} /></ToolIcon>Печать</ToolButton>
        <Caret $w={16} $top={21} />
        <ToolButton $w={58} $pb={4}><ToolIcon><ServiceIcon s={26} /></ToolIcon>Сервис</ToolButton>
        <Caret $w={12} $top={21} />
        <ToolButton $w={42} $pb={4}><ToolIcon><FolderCheckIcon s={26} /></ToolIcon>Вид</ToolButton>
        <Caret $w={8} $top={21} />
        <ToolSpring />
        <ToolButton $w={54} $pb={4}><ToolIcon><ExitIcon s={24} /></ToolIcon>Выход</ToolButton>
      </Toolbar>
      <FormArea>
        <FormTop>
          <DateBlock>
            <DateLine>
              <FieldLabel $w={45}>Период</FieldLabel>
              <DateInput $w={94}>23.09.2014<ChevronDown /></DateInput>
              <BetweenArrow><HollowArrow /></BetweenArrow>
              <DateInput $w={95}>01.11.2018<ChevronDown /></DateInput>
            </DateLine>
            <NavRow>
              <IconSlot $w={28}><CalNum n="1" /></IconSlot>
              <IconSlot $w={28}><CalNum n="7" /></IconSlot>
              <IconSlot $w={28}><CalNum n="31" /></IconSlot>
              <IconSlot $w={30}><CalGrid /></IconSlot>
              <IconSlot $w={30}><NavArrow dbl /></IconSlot>
              <IconSlot $w={28}><NavArrow /></IconSlot>
              <IconSlot $w={28}><NavArrow flip /></IconSlot>
              <IconSlot $w={28}><NavArrow flip dbl /></IconSlot>
            </NavRow>
          </DateBlock>
          <FamilyBlock>
            Номер семьи:
            <GrayBox $h={20} />
          </FamilyBlock>
        </FormTop>
        <FormLine>
          <FieldLabel $w={43} $ml={3}>Филиал</FieldLabel>
          <LookupBox $w={190} $off>
            <LookupText>ЗАО "МЦК" (Коломенское)</LookupText>
            <LookupBtn $w={15} $color="#999">···</LookupBtn>
            <LookupBtn $w={17}><XMark color="#666" /></LookupBtn>
          </LookupBox>
          <FieldLabel $w={84} $ml={20}>Подразделение</FieldLabel>
          <LookupBox $w={174}>
            <LookupText />
            <LookupBtn $w={15}>···</LookupBtn>
            <LookupBtn $w={17}><XMark color="#f00000" /></LookupBtn>
          </LookupBox>
          <FieldLabel $w={48} $ml={7}>Доктор:</FieldLabel>
          <LookupBox $w={200}>
            <LookupText />
            <LookupBtn $w={15}>···</LookupBtn>
            <LookupBtn $w={17}><XMark color="#f00000" /></LookupBtn>
          </LookupBox>
        </FormLine>
        <SaldoLine>
          <SaldoLabel>Начальное сальдо:</SaldoLabel>
          <GrayBox $h={20} $w="85px" $mt={2}>0,00</GrayBox>
          <Rub>руб</Rub>
          <SaldoDivider />
          <SaldoButtons>
            <SquareButton><SmallPrinter /></SquareButton>
            <SquareButton><PrintSendIcon /></SquareButton>
          </SaldoButtons>
        </SaldoLine>
      </FormArea>
      <LedgerWrap>
        <Ledger>
          <GridRow $cols={ledgerCols} $h={32}>
            {ledgerHead.map((h, i) => (
              <HeadCell key={i} $wrap>{i === 0 ? <ListGlyph /> : h}</HeadCell>
            ))}
          </GridRow>
          {ledger.map((r, i) => (
            <GridRow key={i} $cols={ledgerCols} $h={19}>
              <LedgerCell $bg="#efefef" />
              <LedgerCell $right>1</LedgerCell>
              <LedgerCell />
              <LedgerCell $bg="#ffffe0" $color="#000090">{r[0]}</LedgerCell>
              <LedgerCell>{r[1]}</LedgerCell>
              <LedgerCell />
              <LedgerCell $right>{r[2]}</LedgerCell>
              <LedgerCell $right>{r[3]}</LedgerCell>
              <LedgerCell $right>{r[4]}</LedgerCell>
              <LedgerCell />
              <LedgerCell $right>{r[5]}</LedgerCell>
              <LedgerCell />
              <LedgerCell $pl={14}>64</LedgerCell>
            </GridRow>
          ))}
        </Ledger>
        <VScroll><UpCaret /></VScroll>
      </LedgerWrap>
    </ChildWindow>

    <MouseCursor width="14" height="20" viewBox="0 0 14 20">
      <path d="M1 1v15l4-3 3 6 2-1-3-6h5z" fill="#fff" stroke="#222" strokeWidth="1" />
    </MouseCursor>

    <RedBox $x={519} $y={46} $w={93} $h={64} />
    <RedBox $x={1009} $y={217} $w={33} $h={28} $b={5} />
    <RedBox $x={98} $y={372} $w={65} $h={63} />

    <LeftBubble />
    <Note $x={57} $y={255}>Производить<br />оплату через<br />расчеты</Note>

    <Overlay width="1155" height="756" viewBox="0 0 1155 756">
      <path
        d="M999 194.500H1000L1023 210L1044 194.500H1121a24 24 0 0 0 24-24V119a24 24 0 0 0-24-24H1000a24 24 0 0 0-24 24v51.500a24 24 0 0 0 23 24z"
        fill="#fff"
        stroke="#ed1c24"
        strokeWidth="5"
        strokeLinejoin="round"
      />
      <path d="M207 247L490 123" stroke="#ed1c24" strokeWidth="5" strokeLinecap="round" />
      <path d="M517 111L465 127l8 13z" fill="#ed1c24" />
      <path d="M590 123L205 345" stroke="#ed1c24" strokeWidth="5" strokeLinecap="round" />
      <path d="M168 365L212 331l9 18z" fill="#ed1c24" />
    </Overlay>
    <Note $x={998} $y={115}>Исключить при<br />работе нажатие<br />кнопки</Note>
  </>
);

export default App;
